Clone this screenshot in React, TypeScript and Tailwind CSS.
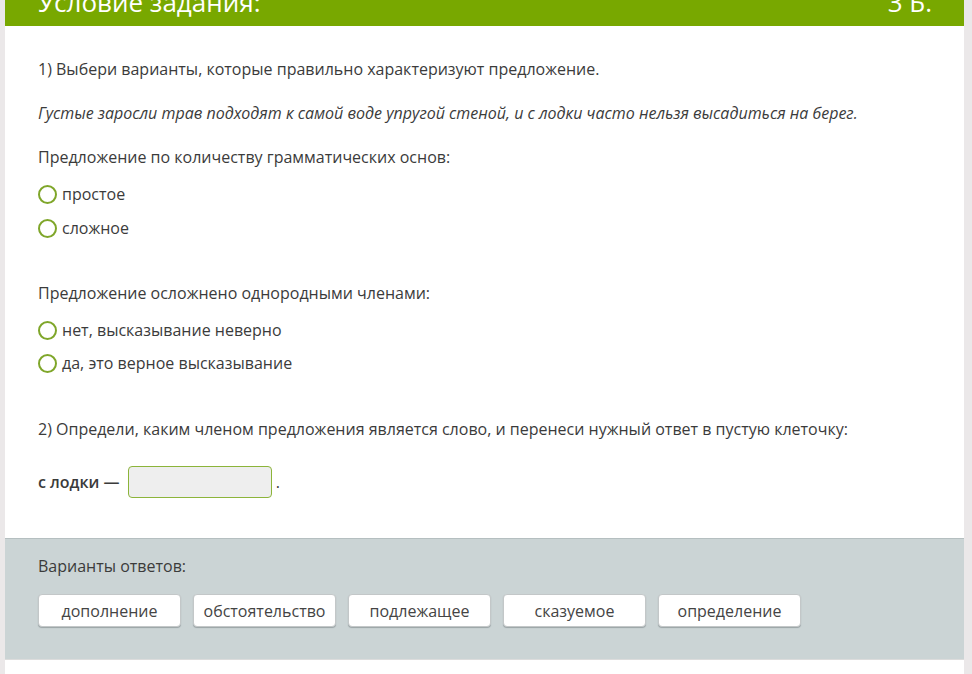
import React from "react"

const radio = (label: string) => (
  <label className="flex items-center gap-[5px] h-[22px]">
    <span className="w-[19px] h-[19px] rounded-full border-2 border-[#7fa62a] bg-white" />
    <span>{label}</span>
  </label>
)

const options = ["дополнение", "обстоятельство", "подлежащее", "сказуемое", "определение"]

export default function App() {
  return (
    <div className="w-[972px] h-[674px] overflow-hidden bg-[#ebe8e9] flex font-['Open_Sans',sans-serif] text-[16px] text-[#3b3b3b]">
      <div className="ml-[5px] w-[959px] bg-white flex flex-col">
        <div className="h-[26px] bg-[#78a800] overflow-hidden">
          <div className="-mt-[20px] h-[44px] flex items-center justify-between pl-[33px] pr-[32px] text-white text-[26px]">
            <span>Условие задания:</span>
            <span>3 Б.</span>
          </div>
        </div>

        <div className="px-[33px] pt-[32px] pb-[40px] flex flex-col">
          <p className="leading-[22px]">1) Выбери варианты, которые правильно характеризуют предложение.</p>
          <p className="mt-[22px] leading-[22px] italic">
            Густые заросли трав подходят к самой воде упругой стеной, и с лодки часто нельзя высадиться на берег.
          </p>
          <p className="mt-[22px] leading-[22px]">Предложение по количеству грамматических основ:</p>
          <div className="mt-[15px] flex flex-col gap-[12px]">
            {radio("простое")}
            {radio("сложное")}
          </div>
          <p className="mt-[43px] leading-[22px]">Предложение осложнено однородными членами:</p>
          <div className="mt-[15px] flex flex-col gap-[11px]">
            {radio("нет, высказывание неверно")}
            {radio("да, это верное высказывание")}
          </div>
          <p className="mt-[44px] leading-[22px]">
            2) Определи, каким членом предложения является слово, и перенеси нужный ответ в пустую клеточку:
          </p>
          <div className="mt-[26px] flex items-center">
            <span className="font-semibold">с лодки —</span>
            <span className="ml-[8px] w-[144px] h-[32px] rounded-[4px] border border-[#8cb43a] bg-[#eeeeee]" />
            <span className="ml-[4px] self-end mb-[4px]">.</span>
          </div>
        </div>

        <div className="h-[122px] bg-[#cbd4d5] border-t border-[#b5bfc0] border-b border-b-[#dcdcdc] px-[33px] pt-[16px]">
          <p className="leading-[22px]">Варианты ответов:</p>
          <div className="mt-[17px] flex gap-[12px]">
            {options.map((o) => (
              <div
                key={o}
                className="w-[143px] h-[33px] rounded-[4px] bg-white border border-[#c3c7c8] shadow-[0_1px_1px_#9aa3a5] flex items-center justify-center text-[#444]"
              >
                {o}
              </div>
            ))}
          </div>
        </div>
        <div className="flex-1 bg-white" />
      </div>
    </div>
  )
}
